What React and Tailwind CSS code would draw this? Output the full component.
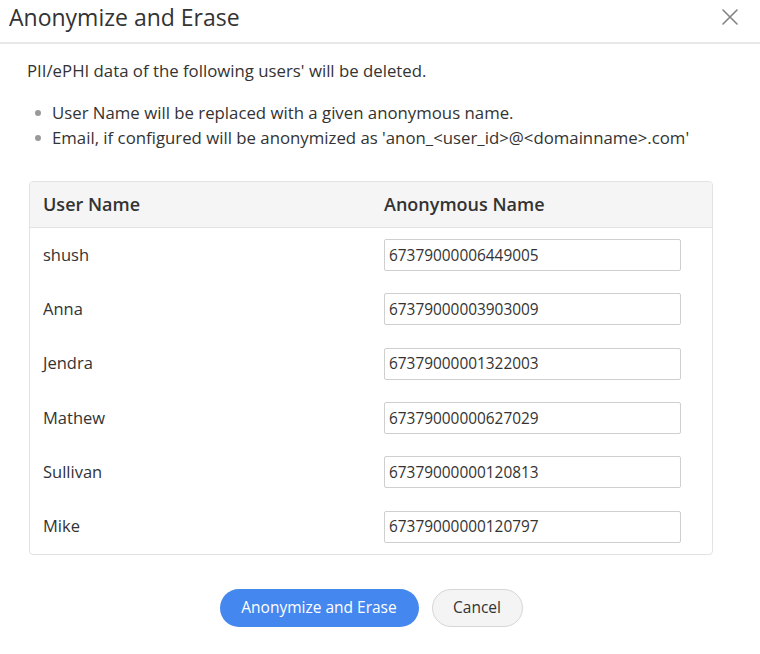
import React, { useState } from 'react';

const users = [
  { name: 'shush', anon: '67379000006449005' },
  { name: 'Anna', anon: '67379000003903009' },
  { name: 'Jendra', anon: '67379000001322003' },
  { name: 'Mathew', anon: '67379000000627029' },
  { name: 'Sullivan', anon: '67379000000120813' },
  { name: 'Mike', anon: '67379000000120797' },
];

const CloseIcon = () => (
  <svg width="18" height="18" viewBox="0 0 18 18" fill="none">
    <path d="M2 2 L16 16 M16 2 L2 16" stroke="#838383" strokeWidth="1.6" strokeLinecap="round" />
  </svg>
);

const App = () => {
  const [rows, setRows] = useState(users);

  const update = (idx, value) => {
    setRows((prev) => prev.map((r, i) => (i === idx ? { ...r, anon: value } : r)));
  };

  return (
    <div className="min-h-[654px] w-[760px] bg-white text-[#333] font-['Open_Sans',sans-serif]">
      {/* header */}
      <div className="flex h-[44px] items-start justify-between border-b-2 border-[#e8e8e8] pl-[9px] pr-[21px]">
        <h1 className="text-[23px] leading-[34px] font-normal text-[#333]">Anonymize and Erase</h1>
        <button className="mt-[8px]" aria-label="Close">
          <CloseIcon />
        </button>
      </div>

      <div className="pl-[29px] pr-[47px]">
        <p className="mt-[15px] -ml-[2px] text-[16.8px] leading-[24px]">
          PII/ePHI data of the following users' will be deleted.
        </p>
        <ul className="mt-[17px] text-[16.8px]">
          <li className="flex h-[25px] items-center">
            <span className="mx-[6px] h-[6px] w-[6px] rounded-full bg-[#999]" />
            <span className="ml-[5px]">User Name will be replaced with a given anonymous name.</span>
          </li>
          <li className="flex h-[25px] items-center">
            <span className="mx-[6px] h-[6px] w-[6px] rounded-full bg-[#999]" />
            <span className="ml-[5px]">
              Email, if configured will be anonymized as 'anon_&lt;user_id&gt;@&lt;domainname&gt;.com'
            </span>
          </li>
        </ul>

        {/* table */}
        <div className="mt-[31px] overflow-hidden rounded-[4px] border border-[#e2e2e2]">
          <div className="grid h-[46px] grid-cols-[341px_1fr] items-center border-b border-[#e2e2e2] bg-[#f5f5f5] text-[18px] font-semibold">
            <div className="pl-[13px]">User Name</div>
            <div className="pl-[13px]">Anonymous Name</div>
          </div>
          {rows.map((r, i) => (
            <div key={r.name} className="grid h-[54.3px] grid-cols-[341px_1fr] items-center text-[16.5px]">
              <div className="pl-[13px]">{r.name}</div>
              <div className="pl-[13px]">
                <input
                  value={r.anon}
                  onChange={(e) => update(i, e.target.value)}
                  className="h-[32px] w-[297px] rounded-[2px] border border-[#cfcfcf] px-[4px] text-[15.4px] text-[#333] outline-none"
                />
              </div>
            </div>
          ))}
        </div>

        {/* actions */}
        <div className="mt-[34px] flex justify-center gap-[13px]">
          <button className="h-[38px] w-[199px] rounded-full bg-[#4487ee] text-[15.5px] text-white">
            Anonymize and Erase
          </button>
          <button className="h-[38px] w-[91px] rounded-full border border-[#d6d6d6] bg-[#f4f4f4] text-[15.5px] text-[#333]">
            Cancel
          </button>
        </div>
      </div>
    </div>
  );
};

export default App;
